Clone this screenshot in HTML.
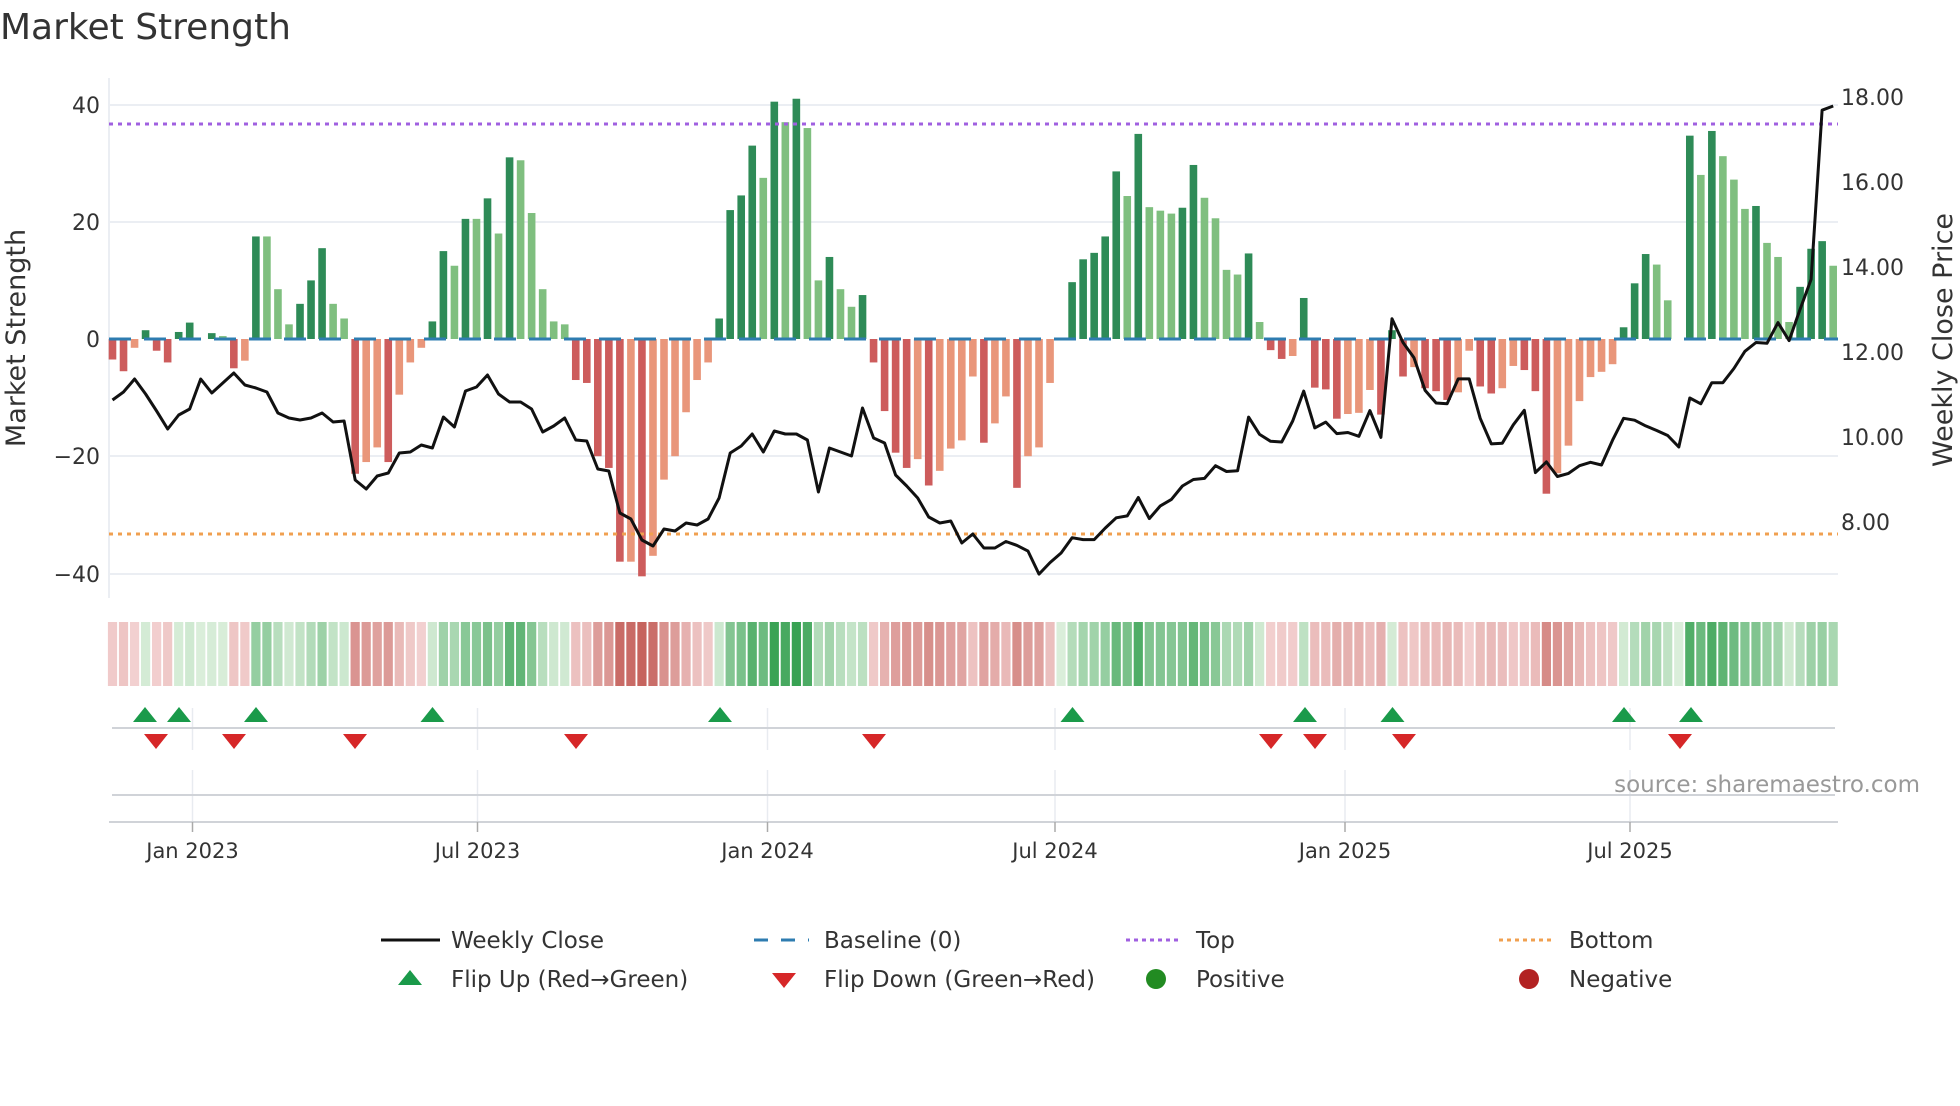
<!DOCTYPE html>
<html><head><meta charset="utf-8">
<style>
html,body{margin:0;padding:0;background:#fff;}
body{width:1960px;height:1102px;overflow:hidden;font-family:"DejaVu Sans","Liberation Sans",sans-serif;}
svg text{font-family:"DejaVu Sans","Liberation Sans",sans-serif;}
</style></head>
<body>
<svg id="s" width="1960" height="1102" xmlns="http://www.w3.org/2000/svg">
<text x="0" y="39" font-size="36" fill="#333">Market Strength</text>
<text x="0" y="0" font-size="27" fill="#333" text-anchor="middle" transform="translate(25,338) rotate(-90)">Market Strength</text>
<text x="0" y="0" font-size="27" fill="#333" text-anchor="middle" transform="translate(1952,340) rotate(-90)">Weekly Close Price</text>
<g font-size="22" fill="#333" text-anchor="end">
<text x="100" y="113">40</text><text x="100" y="230">20</text><text x="100" y="347">0</text>
<text x="100" y="464">−20</text><text x="100" y="582">−40</text>
</g>
<g font-size="22" fill="#333">
<text x="1841" y="105">18.00</text><text x="1841" y="190">16.00</text><text x="1841" y="275">14.00</text>
<text x="1841" y="360">12.00</text><text x="1841" y="445">10.00</text><text x="1841" y="530">8.00</text>
</g>
<g stroke="#ebeef3" stroke-width="2">
<line x1="109" x2="1838" y1="105" y2="105"/><line x1="109" x2="1838" y1="222" y2="222"/>
<line x1="109" x2="1838" y1="456" y2="456"/><line x1="109" x2="1838" y1="574" y2="574"/>
<line x1="109" x2="109" y1="78" y2="598"/>
</g>
<g id="bars"></g>
<line x1="109" x2="1838" y1="339" y2="339" stroke="#2e7cb0" stroke-width="3" stroke-dasharray="22 13"/>
<line x1="109" x2="1838" y1="124" y2="124" stroke="#a060e0" stroke-width="3" stroke-dasharray="4 5"/>
<line x1="109" x2="1838" y1="534" y2="534" stroke="#f0a050" stroke-width="3" stroke-dasharray="4 5"/>
<polyline id="pl" fill="none" stroke="#111" stroke-width="3" stroke-linejoin="round"/>
<g id="heat"></g>
<g stroke="#e8ebf0" stroke-width="1.5">
<line x1="192.5" x2="192.5" y1="708" y2="750"/><line x1="477.5" x2="477.5" y1="708" y2="750"/><line x1="767.5" x2="767.5" y1="708" y2="750"/><line x1="1055" x2="1055" y1="708" y2="750"/><line x1="1345" x2="1345" y1="708" y2="750"/><line x1="1630" x2="1630" y1="708" y2="750"/>
<line x1="192.5" x2="192.5" y1="770" y2="822"/><line x1="477.5" x2="477.5" y1="770" y2="822"/><line x1="767.5" x2="767.5" y1="770" y2="822"/><line x1="1055" x2="1055" y1="770" y2="822"/><line x1="1345" x2="1345" y1="770" y2="822"/><line x1="1630" x2="1630" y1="770" y2="822"/>
</g>
<line x1="112" x2="1835" y1="728" y2="728" stroke="#d0d3d8" stroke-width="2"/>
<line x1="112" x2="1835" y1="795" y2="795" stroke="#d0d3d8" stroke-width="2"/>
<line x1="109" x2="1838" y1="822" y2="822" stroke="#d0d3d8" stroke-width="2"/>
<g stroke="#aaa" stroke-width="1.5">
<line x1="192.5" x2="192.5" y1="822" y2="832"/><line x1="477.5" x2="477.5" y1="822" y2="832"/><line x1="767.5" x2="767.5" y1="822" y2="832"/><line x1="1055" x2="1055" y1="822" y2="832"/><line x1="1345" x2="1345" y1="822" y2="832"/><line x1="1630" x2="1630" y1="822" y2="832"/>
</g>
<g id="mk"></g>
<g font-size="21" fill="#333" text-anchor="middle">
<text x="192.5" y="858">Jan 2023</text><text x="477.5" y="858">Jul 2023</text><text x="767.5" y="858">Jan 2024</text>
<text x="1055" y="858">Jul 2024</text><text x="1345" y="858">Jan 2025</text><text x="1630" y="858">Jul 2025</text>
</g>
<text x="1920" y="792" font-size="23" fill="#999" text-anchor="end">source: sharemaestro.com</text>
<g font-size="23" fill="#333">
<line x1="381" x2="440" y1="940" y2="940" stroke="#111" stroke-width="3"/>
<text x="451" y="948">Weekly Close</text>
<line x1="754" x2="809" y1="940" y2="940" stroke="#2e7cb0" stroke-width="3" stroke-dasharray="14 13"/>
<text x="824" y="948">Baseline (0)</text>
<line x1="1126" x2="1181" y1="940" y2="940" stroke="#a060e0" stroke-width="3" stroke-dasharray="4 4"/>
<text x="1196" y="948">Top</text>
<line x1="1499" x2="1554" y1="940" y2="940" stroke="#f0a050" stroke-width="3" stroke-dasharray="4 4"/>
<text x="1569" y="948">Bottom</text>
<polygon points="398,985 422,985 410,970" fill="#1a9a4a"/>
<text x="451" y="987">Flip Up (Red→Green)</text>
<polygon points="772,973 796,973 784,988" fill="#d62728"/>
<text x="824" y="987">Flip Down (Green→Red)</text>
<circle cx="1156" cy="979" r="10" fill="#228b22"/>
<text x="1196" y="987">Positive</text>
<circle cx="1529" cy="979" r="10" fill="#b22222"/>
<text x="1569" y="987">Negative</text>
</g>
</svg>
<script>
var V=[-3.5,-5.5,-1.5,1.5,-2,-4,1.2,2.8,0,1,0.5,-5,-3.7,17.5,17.5,8.5,2.5,6,10,15.5,6,3.5,
-23,-21,-18.5,-21,-9.5,-4,-1.5,3,15,12.5,20.5,20.5,24,18,31,30.5,21.5,8.5,3,2.5,
-7,-7.5,-20,-22,-38,-38,-40.5,-37,-24,-20,-12.5,-7,-4,3.5,22,24.5,33,27.5,40.5,37,41,36,10,14,8.5,5.5,7.5,
-4,-12.3,-19.4,-22,-20.5,-25,-22.5,-18.7,-17.3,-6.4,-17.7,-14.4,-9.8,-25.4,-20,-18.5,-7.5,0,
9.7,13.6,14.7,17.5,28.6,24.4,35,22.5,21.9,21.4,22.4,29.7,24.1,20.6,11.8,11,14.6,2.9,
-1.9,-3.4,-2.9,7,-8.3,-8.6,-13.6,-12.8,-12.6,-8.7,-12.9,1.5,-6.4,-4.8,-8.4,-8.9,-10.4,-9.1,-2,-8.1,-9.3,-8.4,-4.6,-5.3,-8.9,-26.4,-22.9,-18.2,-10.6,-6.5,-5.6,-4.3,
2,9.5,14.5,12.7,6.6,0,34.7,28,35.5,31.2,27.2,22.2,22.7,16.4,14,2.9,8.9,15.4,16.7,12.5];
var P1=[400,392,379,394,411,429,415,409,379,393,383,373,385,388,392,413,418,420,418,413,422,421,480,489,476,473,453,452,445,448,417,427,391,387,375,394,402,402,409,432,426,418,440,441,469,471,513,519,540,546,529,531,523,525,519,498,453,446,434,452,431,434,434,440,492,448,452,456,408,438,443,475,486,498,517,523,521,543,534];
var P2=[1432,1432,1415,1425,1440,1500,1470,1445,1405,1410,1410,1380,1353,1348,1300,1355,1322,1305,1270,1253,1250,1217,1232,1230,1090,1135,1153,1155,1100,1022,1118,1103,1133,1130,1140,1073,1143,833,895,935,1020,1053,1055,990,990,1093,1160,1158,1110,1072,1235,1207,1245,1237,1217,1208,1215,1150,1093,1098,1113,1125,1138,1168,1040,1055,1000,1000,963,918,895,897,843,890,808,730,288,277];
var NS="http://www.w3.org/2000/svg";
function el(t,a,p){var e=document.createElementNS(NS,t);for(var k in a)e.setAttribute(k,a[k]);p.appendChild(e);return e;}
var bars=document.getElementById('bars'),heat=document.getElementById('heat');
var pitch=11.03,x0=112.5,U=5.86;
function lerp(a,b,t){return Math.round(a+(b-a)*t);}
for(var i=0;i<V.length;i++){
 var v=V[i],x=x0+i*pitch,p=i?V[i-1]:0;
 var dark=(v*p<=0)||Math.abs(v)>Math.abs(p);
 var c=v>=0?(dark?'#2e8b57':'#7fbf7f'):(dark?'#cd5c5c':'#e9967a');
 if(Math.abs(v)>0.2){var h=Math.abs(v)*U;el('rect',{x:x-3.8,width:7.6,y:v>0?339-h:339,height:h,fill:c},bars);}
 var t=Math.min(Math.abs(v)/42,1),col;
 if(v>=0)col='rgb('+lerp(218,52,t)+','+lerp(238,160,t)+','+lerp(218,80,t)+')';
 else col='rgb('+lerp(244,196,t)+','+lerp(212,96,t)+','+lerp(212,90,t)+')';
 el('rect',{x:x-4.6,width:9.2,y:622,height:64,fill:col},heat);
}
var pts=[];
for(var i=0;i<P1.length;i++)pts.push((x0+i*pitch).toFixed(1)+','+P1[i]);
for(var j=0;j<P2.length;j++)pts.push((x0+(79+j)*pitch).toFixed(1)+','+(P2[j]/2.613).toFixed(1));
document.getElementById('pl').setAttribute('points',pts.join(' '));
var mk=document.getElementById('mk');
[145,179,256,432.5,720,1072.5,1305,1392.5,1624,1691].forEach(function(x){el('polygon',{points:(x-12)+',722 '+(x+12)+',722 '+x+',707',fill:'#1a9a4a'},mk);});
[156,234,355,576,874,1271,1315,1404,1680].forEach(function(x){el('polygon',{points:(x-12)+',734 '+(x+12)+',734 '+x+',749',fill:'#d62728'},mk);});
</script>
</body></html>
